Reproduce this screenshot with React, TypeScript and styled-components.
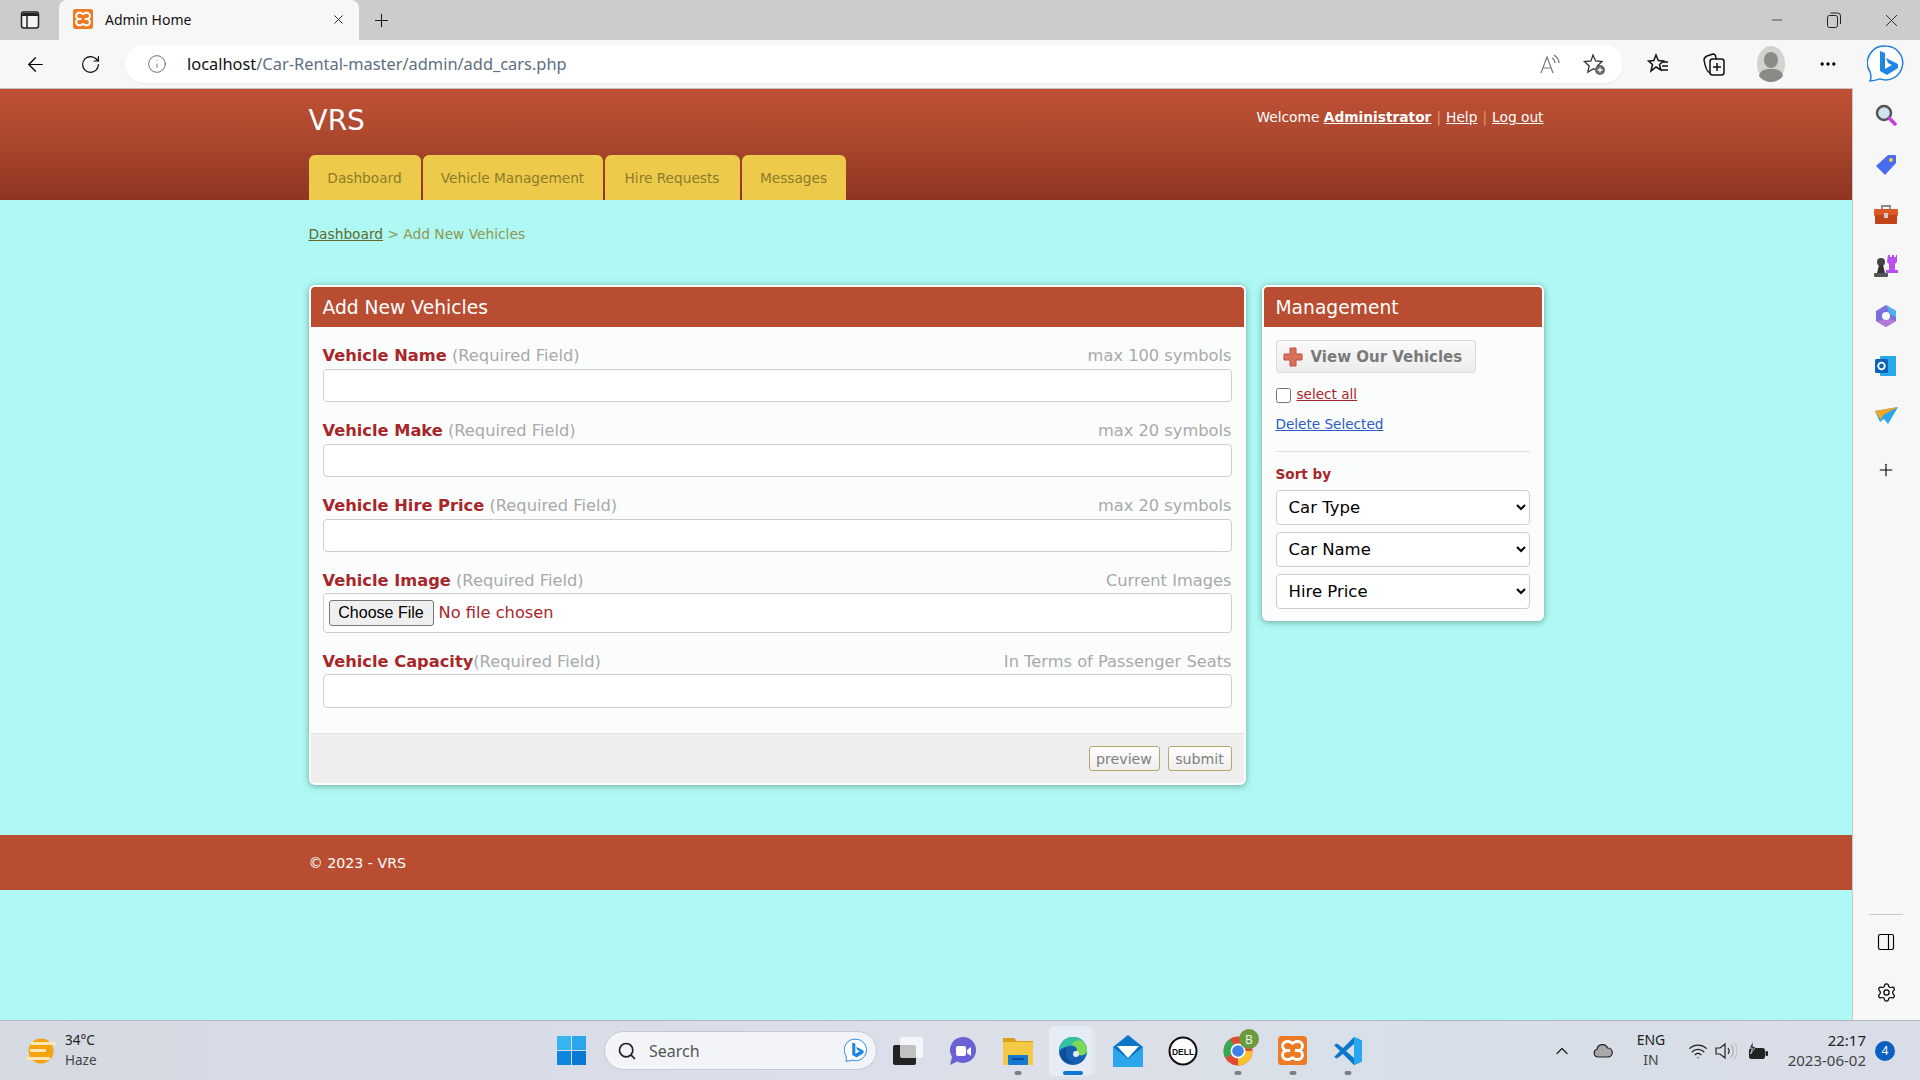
import React from "react";
import styled, { createGlobalStyle } from "styled-components";
import {
  ArrowLeft,
  ChevronUp,
  Ellipsis,
  Info,
  Minus,
  PanelRight,
  Plus,
  RotateCw,
  Search,
  Settings,
  Wifi,
  X,
} from "lucide-react";

const GlobalStyle = createGlobalStyle`
  html, body {
    margin: 0;
    padding: 0;
    height: 100%;
    overflow: hidden;
  }
  * {
    box-sizing: border-box;
  }
`;

const Screen = styled.div`
  width: 1920px;
  height: 1080px;
  display: flex;
  flex-direction: column;
  background: #aef9f4;
  font-family: "DejaVu Sans", Verdana, sans-serif;
`;

/* browser chrome */
const TabStrip = styled.div`
  height: 40px;
  background: #cccccc;
  display: flex;
  align-items: center;
  color: #1a1a1a;
  font-family: "Noto Sans", "Open Sans", sans-serif;
`;

const StripButton = styled.div<{ $w: number }>`
  width: ${(p) => p.$w}px;
  height: 40px;
  display: flex;
  align-items: center;
  justify-content: center;
  flex-shrink: 0;
`;

const BrowserTab = styled.div`
  width: 300px;
  height: 40px;
  background: #f7f7f7;
  border-radius: 8px 8px 0 0;
  display: flex;
  align-items: center;
  padding: 0 13px 2px 14px;
  font-size: 14px;
`;

const TabTitle = styled.span`
  margin-left: 12px;
  flex: 1;
  color: #111;
`;

const WindowControls = styled.div`
  margin-left: auto;
  display: flex;
`;

const Toolbar = styled.div`
  height: 48px;
  background: #f7f7f7;
  display: flex;
  align-items: center;
  font-family: "Noto Sans", "Open Sans", sans-serif;
`;

const ToolSlot = styled.div<{ $w: number }>`
  width: ${(p) => p.$w}px;
  height: 40px;
  display: flex;
  align-items: center;
  justify-content: center;
  flex-shrink: 0;
`;

const AddressBar = styled.div`
  width: 1498px;
  height: 38px;
  background: #fff;
  border-radius: 19px;
  display: flex;
  align-items: center;
  padding-left: 22px;
  box-shadow: 0 1px 2px rgba(0, 0, 0, 0.06);
`;

const Url = styled.div`
  margin-left: 20px;
  margin-bottom: 2px;
  flex: 1;
  font-size: 16.4px;
  color: #5e6e80;
  white-space: nowrap;
  b {
    font-weight: 400;
    color: #111;
  }
`;

/* page area */
const Middle = styled.div`
  flex: 1;
  display: flex;
  min-height: 0;
`;

const Page = styled.div`
  flex: 1;
  min-width: 0;
  border-top: 1px solid #c4c4c4;
`;

const Container = styled.div`
  width: 1235px;
  margin: 0 auto;
`;

const Header = styled.header`
  height: 111px;
  background: linear-gradient(#c05035, #b04a30 35%, #8e3522);
`;

const HeaderInner = styled(Container)`
  height: 100%;
  display: flex;
  flex-direction: column;
`;

const TopLine = styled.div`
  display: flex;
  justify-content: space-between;
  height: 66px;
`;

const Brand = styled.div`
  color: #fff;
  font-size: 28px;
  line-height: 30px;
  margin-top: 17px;
`;

const UserLinks = styled.div`
  margin-top: 19px;
  color: #fff;
  font-size: 13.75px;
  line-height: 18px;
  a {
    color: #fff;
    text-decoration: underline;
  }
  i {
    font-style: normal;
    color: #e09a6a;
    margin: 0 5px;
  }
`;

const Nav = styled.nav`
  display: flex;
  gap: 2px;
`;

const NavTab = styled.a<{ $w: number }>`
  width: ${(p) => p.$w}px;
  height: 45px;
  background: #eeca4a;
  border-radius: 6px 6px 0 0;
  color: #8c7b2b;
  font-size: 13.7px;
  display: flex;
  align-items: center;
  justify-content: center;
`;

const Crumbs = styled.div`
  height: 85px;
  padding-top: 25px;
  font-size: 13.75px;
  line-height: 18px;
  color: #8f9650;
  a {
    color: #5e6a2a;
    text-decoration: underline;
  }
`;

const Columns = styled.div`
  display: flex;
  gap: 16px;
  align-items: flex-start;
`;

const Panel = styled.section<{ $w: number }>`
  width: ${(p) => p.$w}px;
  background: #fbfdfc;
  border: 2px solid #fff;
  border-radius: 6px;
  overflow: hidden;
  box-shadow: 0 1px 6px rgba(60, 90, 80, 0.55);
`;

const PanelTitle = styled.h2`
  margin: 0;
  height: 40px;
  background: #b84d32;
  color: #fff;
  font-size: 18.7px;
  font-weight: 400;
  line-height: 42px;
  padding-left: 12px;
`;

const FormBody = styled.div`
  padding: 18px 12px 25px 12px;
`;

const Field = styled.div`
  margin-bottom: 18px;
  &:last-child {
    margin-bottom: 0;
  }
`;

const LabelRow = styled.div<{ $tight?: boolean }>`
  display: flex;
  justify-content: space-between;
  height: 20px;
  line-height: 22px;
  font-size: 16.25px;
  color: #a9a9a9;
  margin-bottom: ${(p) => (p.$tight ? 3 : 4)}px;
  strong {
    color: #a8262a;
  }
`;

const TextInput = styled.input<{ $h?: number }>`
  display: block;
  width: 100%;
  height: ${(p) => p.$h ?? 33}px;
  background: #fff;
  border: 1px solid #d3cdc5;
  border-radius: 4px;
  outline: none;
`;

const FileBox = styled.div`
  height: 40px;
  border: 1px solid #d3cdc5;
  border-radius: 4px;
  background: #fff;
  padding: 6px 0 0 5px;
`;

const FileInput = styled.input`
  font-family: "DejaVu Sans", sans-serif;
  font-size: 16.25px;
  color: #a8262a;
  width: 400px;
  &::file-selector-button {
    font-family: "Liberation Sans", sans-serif;
    font-size: 16px;
    color: #000;
    width: 105px;
    height: 26px;
    padding: 0;
    margin-right: 5px;
    background: #efefef;
    border: 1px solid #767676;
    border-radius: 3px;
  }
`;

const FormFooter = styled.div`
  height: 50px;
  background: #eeeeee;
  border-top: 1px solid #e2e2e2;
  display: flex;
  justify-content: flex-end;
  gap: 8px;
  padding: 12px 12px 0 0;
`;

const SmallButton = styled.button<{ $w: number }>`
  width: ${(p) => p.$w}px;
  height: 25px;
  padding: 0;
  font-family: "DejaVu Sans", sans-serif;
  font-size: 14.2px;
  color: #808080;
  background: linear-gradient(#fff, #eee);
  border: 1px solid #b5a76c;
  border-radius: 3px;
`;

const SideBody = styled.div`
  padding: 13px 12px 10px 12px;
`;

const ViewButton = styled.button`
  width: 200px;
  height: 33px;
  display: flex;
  align-items: center;
  padding: 0 0 0 6px;
  gap: 8px;
  font-family: "DejaVu Sans", sans-serif;
  font-size: 15px;
  font-weight: 700;
  color: #7a7a7a;
  background: linear-gradient(#fafafa, #ececec);
  border: 1px solid #dcdcdc;
  border-radius: 3px;
`;

const SelectAllRow = styled.div`
  display: flex;
  align-items: center;
  margin-top: 13px;
  height: 16px;
  font-size: 13.6px;
  a {
    color: #a8262a;
    text-decoration: underline;
    margin-left: 6px;
  }
`;

const CheckBox = styled.input`
  width: 15px;
  height: 15px;
  margin: 2px 0 0;
`;

const DeleteLink = styled.a`
  display: block;
  margin-top: 13px;
  font-size: 13.6px;
  line-height: 18px;
  color: #2a5cc4;
  text-decoration: underline;
`;

const Rule = styled.hr`
  border: none;
  border-top: 1px solid #e2e2de;
  margin: 18px 0 13px;
`;

const SortLabel = styled.div`
  font-size: 13.6px;
  font-weight: 700;
  line-height: 18px;
  color: #a8262a;
  margin-bottom: 7px;
`;

const SortSelect = styled.select`
  display: block;
  width: 254px;
  height: 35px;
  margin-bottom: 7px;
  padding-left: 8px;
  font-family: "DejaVu Sans", sans-serif;
  font-size: 16.5px;
  color: #000;
  background: #fff;
  border: 1px solid #d3cdc5;
  border-radius: 4px;
  &:last-child {
    margin-bottom: 0;
  }
`;

const Footer = styled.footer`
  height: 55px;
  margin-top: 50px;
  background: #b84d32;
  color: #fff;
  font-size: 14.2px;
  line-height: 57px;
`;

/* edge side bar */
const EdgeBar = styled.aside`
  width: 68px;
  background: #f7f7f7;
  border-left: 1px solid #c9c9c9;
  display: flex;
  flex-direction: column;
  align-items: center;
  padding: 2px 1px 0 0;
`;

const EdgeSlot = styled.div<{ $h?: number; $push?: number }>`
  height: ${(p) => p.$h ?? 50.15}px;
  margin-top: ${(p) => p.$push ?? 0}px;
  display: flex;
  align-items: center;
  justify-content: center;
`;

const EdgeSpacer = styled.div`
  flex: 1;
`;

const EdgeRule = styled.div`
  width: 34px;
  border-top: 1px solid #c9c9c9;
  margin-bottom: 2px;
`;

/* task bar */
const TaskBar = styled.div`
  height: 60px;
  border-top: 1px solid #b4b8c0;
  background: linear-gradient(90deg, #d4d9e2, #d9deea 40%, #dde0e8 55%, #d6dfe8 75%, #dadde8);
  display: flex;
  align-items: center;
  font-family: "Noto Sans", "Open Sans", sans-serif;
  color: #222;
`;

const Weather = styled.div`
  width: 557px;
  padding-left: 26px;
  display: flex;
  align-items: center;
  gap: 9px;
`;

const StackText = styled.div<{ $align?: string; $size?: number }>`
  display: flex;
  flex-direction: column;
  font-size: ${(p) => p.$size ?? 13.5}px;
  line-height: 20px;
  margin-top: -2px;
  text-align: ${(p) => p.$align ?? "left"};
  span + span {
    color: #444;
  }
`;

const SearchPill = styled.div`
  width: 273px;
  height: 39px;
  margin-left: 18px;
  background: #f2f4f8;
  border: 1px solid #c4c8d2;
  border-radius: 20px;
  display: flex;
  align-items: center;
  padding: 0 8px 0 12px;
  font-size: 16px;
  color: #555;
`;

const SearchText = styled.span`
  margin-left: 12px;
  flex: 1;
`;

const Apps = styled.div`
  display: flex;
  margin-left: 3px;
`;

const AppSlot = styled.div<{ $active?: boolean; $running?: boolean }>`
  width: 55px;
  height: 50px;
  position: relative;
  display: flex;
  align-items: center;
  justify-content: center;
  &::before {
    content: "";
    display: ${(p) => (p.$active ? "block" : "none")};
    position: absolute;
    top: 0;
    bottom: 0;
    left: 4px;
    width: 43px;
    border-radius: 5px;
    background: #e6ecf5;
    box-shadow: 5px 0 0 -1px #dfe6f0;
  }
  &::after {
    content: "";
    display: ${(p) => (p.$running || p.$active ? "block" : "none")};
    position: absolute;
    bottom: 1px;
    left: 50%;
    transform: translateX(-50%);
    width: ${(p) => (p.$active ? 20 : 7)}px;
    height: 4px;
    border-radius: 2px;
    background: ${(p) => (p.$active ? "#0a78d4" : "#7b7f88")};
  }
  svg {
    position: relative;
  }
`;

const Tray = styled.div`
  margin-left: auto;
  display: flex;
  align-items: center;
  padding-right: 25px;
`;

const TraySlot = styled.div<{ $w: number }>`
  width: ${(p) => p.$w}px;
  display: flex;
  justify-content: center;
  align-items: center;
`;

const Clock = styled.div`
  width: 90px;
`;

const Badge = styled.div`
  width: 20px;
  height: 20px;
  margin-left: 9px;
  border-radius: 50%;
  background: #0a5fc0;
  color: #fff;
  font-size: 12px;
  text-align: center;
  line-height: 20px;
`;

/* drawings */
const XamppIcon = ({ size = 20 }: { size?: number }) => (
  <svg width={size} height={size} viewBox="0 0 24 24">
    <rect width="24" height="24" rx="3" fill="#ee7a24" />
    <path
      d="M10 4.500H7.500a3 3 0 0 0 0 7.500H10M10 12H7.500a3 3 0 0 0 0 7.500H10M14 4.500h2.500a3 3 0 0 1 0 7.500H14M14 12h2.500a3 3 0 0 1 0 7.500H14M10 4.500c1 2 3 2 4 0M10 19.500c1-2 3-2 4 0"
      fill="none"
      stroke="#fff"
      strokeWidth="2.400"
    />
  </svg>
);

const BingBubble = ({ size = 38 }: { size?: number }) => (
  <svg width={size} height={size * 1.05} viewBox="0 0 38 40">
    <path
      d="M19 2a17 17 0 1 1-6 33c-3 1-7 2-10 2 1-2 1-6 0-9A17 17 0 0 1 19 2z"
      fill="#fff"
      stroke="#1f7fe0"
      strokeWidth="1.500"
    />
    <path d="M13 7l5 2v16l7-4-4-2-2-5 12 6v4l-11 7-7-4z" fill="#1e86e8" />
  </svg>
);

const EdgeLogo = () => (
  <svg width="30" height="30" viewBox="0 0 30 30">
    <circle cx="15" cy="15" r="14" fill="#1560b0" />
    <path d="M1 15C2 5 9 1 15 1c8 0 14 6 14 13 0 4-4 6-8 5-3-1-3-3-2-5 0-3-4-5-8-4-5 1-9 3-10 5z" fill="#33c3a0" />
    <path d="M29 14c0 4-4 6-8 5-3-1-3-3-2-5 0-3-3-5-6-5 3-5 9-6 12-3 3 2 4 5 4 8z" fill="#7ed957" />
    <path d="M8 17c0 6 4 9 9 9-6 3-14 0-15-8 1-4 4-6 7-7-1 2-1 4-1 6z" fill="#0f4d96" />
    <circle cx="18" cy="18" r="3" fill="#e6ecf5" />
  </svg>
);

const ChromeLogo = () => (
  <svg width="42" height="44" viewBox="0 0 42 44">
    <circle cx="21" cy="22" r="14.500" fill="#e24a33" />
    <path d="M21 22L8.500 29A14.500 14.500 0 0 1 13 10z" fill="#34a853" />
    <path d="M21 22h14.500A14.500 14.500 0 0 1 21 36.500z" fill="#fbc02d" />
    <circle cx="21" cy="22" r="7.500" fill="#fff" />
    <circle cx="21" cy="22" r="5.800" fill="#3f82ea" />
    <circle cx="32" cy="10" r="10" fill="#6d9a3d" />
    <text x="32" y="14.500" fontSize="12" fill="#eef4e0" textAnchor="middle" fontFamily="Noto Sans">B</text>
  </svg>
);

const DellLogo = () => (
  <svg width="30" height="30" viewBox="0 0 30 30">
    <circle cx="15" cy="15" r="13.500" fill="#fff" stroke="#111" strokeWidth="2" />
    <text x="15" y="18.500" fontSize="8.500" fontWeight="700" textAnchor="middle" fontFamily="Liberation Sans" fill="#111">DELL</text>
  </svg>
);

const WindowsLogo = () => (
  <svg width="29" height="29" viewBox="0 0 29 29" style={{ flexShrink: 0 }}>
    <rect width="14" height="14" fill="#36b5f0" />
    <rect x="15" width="14" height="14" fill="#2aa6ec" />
    <rect y="15" width="14" height="14" fill="#0c86de" />
    <rect x="15" y="15" width="14" height="14" fill="#0a78d4" />
  </svg>
);

const WeatherIcon = () => (
  <svg width="30" height="26" viewBox="0 0 30 26">
    <circle cx="15" cy="13" r="12.500" fill="#f5a20f" />
    <g fill="#fbe6b4">
      <rect x="5" y="4" width="25" height="3" />
      <rect x="4" y="11" width="16" height="3" />
      <rect x="0" y="19" width="24" height="3" />
    </g>
  </svg>
);

const TaskViewIcon = () => (
  <svg width="30" height="28" viewBox="0 0 30 28">
    <rect x="0" y="8" width="23" height="20" rx="2" fill="#222" />
    <rect x="7" y="0" width="23" height="21" rx="2" fill="#fff" opacity="0.72" />
  </svg>
);

const TeamsIcon = () => (
  <svg width="30" height="30" viewBox="0 0 30 30">
    <path d="M15 1a13 13 0 1 1-6 24.500L2 29l2-8A13 13 0 0 1 15 1z" fill="#6a62d4" />
    <rect x="8" y="10" width="10" height="10" rx="2" fill="#fff" />
    <path d="M19 14l4-3v9l-4-3z" fill="#fff" />
  </svg>
);

const FolderIcon = () => (
  <svg width="30" height="30" viewBox="0 0 30 30">
    <path d="M0 2h11l3 3h16v24H0z" fill="#d9a017" />
    <rect x="0" y="6" width="30" height="23" rx="1" fill="#f6c944" />
    <rect x="5" y="19" width="20" height="10" rx="1" fill="#1478d4" />
    <rect x="9" y="22" width="12" height="2" fill="#0b4f96" />
  </svg>
);

const MailIcon = () => (
  <svg width="30" height="32" viewBox="0 0 30 32">
    <path d="M15 0l15 12v20H0V12z" fill="#0d74c8" />
    <path d="M4 11h22L15 23z" fill="#fff" />
    <path d="M0 12l15 12 15-12v20H0z" fill="#2ba5ec" />
  </svg>
);

const VsCodeIcon = () => (
  <svg width="30" height="30" viewBox="0 0 30 30">
    <path d="M21 1l8 3.500v21L21 29l-11-11-6 4.500L1 21l6-6-6-6 3-1.500L10 12z" fill="#0e78c8" />
    <path d="M21 8l-8 7 8 7z" fill="#d9dfe8" />
    <path d="M21 1l8 3.500v21L21 29z" fill="#27a7ef" />
  </svg>
);

const CloudIcon = () => (
  <svg width="20" height="20" viewBox="0 0 20 20">
    <path d="M5 16a4 4 0 0 1-1-7.800A5.500 5.500 0 0 1 14.500 7 4.500 4.500 0 0 1 15 16z" fill="#a8a8a8" stroke="#222" strokeWidth="1.200" />
  </svg>
);

const SpeakerIcon = () => (
  <svg width="22" height="20" viewBox="0 0 22 20" fill="none" stroke="#222" strokeWidth="1.200">
    <path d="M1 7v6h4l5 4V3L5 7z" />
    <path d="M13 7c1.500 2 1.500 4 0 6" />
    <path d="M16 4c3 3 3 9 0 12" stroke="#aaa" />
    <path d="M19 2c4 4 4 12 0 16" stroke="#c4c4c4" />
  </svg>
);

const BatteryIcon = () => (
  <svg width="22" height="20" viewBox="0 0 22 20">
    <rect x="2" y="7" width="16" height="11" rx="2.500" fill="#222" />
    <rect x="18.500" y="10" width="2.500" height="5" rx="1" fill="#222" />
    <path d="M6 0L2.500 7H5.500L3.500 13 9 5.500H6z" fill="#222" stroke="#dfe3ea" strokeWidth="0.800" />
  </svg>
);

const SidebarToggleIcon = () => (
  <svg width="20" height="20" viewBox="0 0 20 20">
    <rect x="1.500" y="2" width="17" height="16" rx="2.500" fill="#f4f4f4" stroke="#222" strokeWidth="1.500" />
    <path d="M2 6V4.500A2 2 0 0 1 4 3h12a2 2 0 0 1 2 1.500V6z" fill="#222" />
    <path d="M7 6v12" stroke="#222" strokeWidth="1.500" />
  </svg>
);

const RestoreIcon = () => (
  <svg width="14" height="16" viewBox="0 0 14 16" fill="none" stroke="#222" strokeWidth="1">
    <rect x="0.500" y="3.500" width="10" height="12" rx="2" />
    <path d="M3.500 1h7a3 3 0 0 1 3 3v8" />
  </svg>
);

const ReadAloudIcon = () => (
  <svg width="22" height="22" viewBox="0 0 22 22" fill="none" stroke="#777" strokeWidth="1.200">
    <path d="M2 20L8 4l6 16M4.500 15h7" />
    <path d="M13 5c2 1 3 3 3 5M15 2c3 2 5 5 5 8" />
  </svg>
);

const StarAddIcon = () => (
  <svg width="24" height="24" viewBox="0 0 24 24" fill="none" stroke="#333" strokeWidth="1.300">
    <path d="M11 3l2.600 6 6.400.6-4.800 4.300 1 4-5.200-1-5.200 3.300 1.400-6.300L2.500 9.600 9 9z" />
    <circle cx="18" cy="18" r="5" fill="#666" stroke="none" />
    <path d="M18 15.500v5M15.500 18h5" stroke="#fff" />
  </svg>
);

const FavoritesIcon = () => (
  <svg width="22" height="22" viewBox="0 0 22 22" fill="none" stroke="#111" strokeWidth="1.500">
    <path d="M9 2l2.300 5.500 5.200.5-4 3.500 1.300 5.500L9 14l-5 4 1.500-6.500L1.500 8l5.300-.5z" />
    <path d="M15 9h6M15 13h6M14 17h7" />
  </svg>
);

const CollectionsIcon = () => (
  <svg width="24" height="24" viewBox="0 0 24 24" fill="none" stroke="#111" strokeWidth="1.500">
    <rect x="8" y="7" width="14" height="16" rx="2.500" />
    <path d="M8 21C5 20 3 14 2 8c0-2 1-3 3-4l6-2c2 0 3 1 3 5" />
    <path d="M15 11v8M11 15h8" />
  </svg>
);

const ProfileIcon = () => (
  <svg width="28" height="36" viewBox="0 0 28 36">
    <ellipse cx="14" cy="18" rx="14" ry="18" fill="#d2d2ce" />
    <ellipse cx="14" cy="14" rx="7" ry="8" fill="#8a8a86" />
    <path d="M2 30c1-6 6-7 12-7s11 1 12 7c-3 4-8 6-12 6s-9-2-12-6z" fill="#8a8a86" />
  </svg>
);

const ToolSearchIcon = () => (
  <svg width="22" height="22" viewBox="0 0 22 22" fill="none">
    <circle cx="9" cy="9" r="7" fill="#cfe2ee" stroke="#555" strokeWidth="2.500" />
    <path d="M14 14l6 6" stroke="#c23fd8" strokeWidth="3.500" strokeLinecap="round" />
  </svg>
);

const TagIcon = () => (
  <svg width="22" height="22" viewBox="0 0 22 22">
    <path d="M13 1h7a1 1 0 0 1 1 1v7L10 21 1 12z" fill="#4a6cf0" />
    <circle cx="16" cy="6" r="2" fill="#f5cf3a" />
  </svg>
);

const ToolboxIcon = () => (
  <svg width="24" height="22" viewBox="0 0 24 22">
    <path d="M8 5V2h8v3" fill="none" stroke="#888" strokeWidth="1.800" />
    <rect y="5" width="24" height="7" rx="1" fill="#dc5a24" />
    <rect x="1" y="11" width="22" height="9" rx="1" fill="#c24416" />
    <rect x="10" y="9" width="4" height="5" fill="#ccc" />
  </svg>
);

const ChessIcon = () => (
  <svg width="24" height="24" viewBox="0 0 24 24">
    <path d="M14 2h2v2h2V2h2v2h2V2h1v7l-2 2v6h3v3H12v-3h3v-6l-2-2z" fill="#b84ff0" />
    <circle cx="7" cy="9" r="4" fill="#444" />
    <path d="M5 12h4l2 8H3z" fill="#333" />
    <rect x="0" y="20" width="14" height="4" rx="1" fill="#555" />
  </svg>
);

const M365Icon = () => (
  <svg width="22" height="24" viewBox="0 0 22 24">
    <path d="M11 1l10 6v10l-10 6-10-6V7z" fill="#7a6fdc" />
    <path d="M11 1l10 6v6l-6-3z" fill="#4ab6ec" />
    <path d="M1 17l10 6 10-6-7-2z" fill="#b07ad8" />
    <circle cx="11" cy="12" r="4" fill="#f7f7f7" />
  </svg>
);

const OutlookIcon = () => (
  <svg width="22" height="22" viewBox="0 0 22 22">
    <rect x="5" y="1" width="16" height="20" rx="1" fill="#28a8ea" />
    <rect y="4" width="13" height="14" rx="1.500" fill="#0a64b8" />
    <circle cx="6.500" cy="11" r="3.300" fill="none" stroke="#fff" strokeWidth="1.800" />
  </svg>
);

const SendIcon = () => (
  <svg width="24" height="18" viewBox="0 0 24 18">
    <path d="M1 4l23-4-10 17-4-5-4 3z" fill="#2ba5ec" />
    <path d="M1 4l23-4-15 8 -2 5z" fill="#f3a71c" />
  </svg>
);

const PlusBadgeIcon = () => (
  <svg width="20" height="20" viewBox="0 0 20 20">
    <path d="M7 1h6v6h6v6h-6v6H7v-6H1V7h6z" fill="#d9705c" stroke="#c0503a" />
  </svg>
);

type FieldDef = { name: string; note: string };

const fields: FieldDef[] = [
  { name: "Vehicle Name", note: "max 100 symbols" },
  { name: "Vehicle Make", note: "max 20 symbols" },
  { name: "Vehicle Hire Price", note: "max 20 symbols" },
];

const App = () => {
  return (
    <Screen>
      <GlobalStyle />
      <TabStrip>
        <StripButton $w={59}>
          <SidebarToggleIcon />
        </StripButton>
        <BrowserTab>
          <XamppIcon />
          <TabTitle>Admin Home</TabTitle>
          <X size={15} strokeWidth={1.5} />
        </BrowserTab>
        <StripButton $w={44}>
          <Plus size={21} strokeWidth={1.2} />
        </StripButton>
        <WindowControls>
          <StripButton $w={57}>
            <Minus size={16} strokeWidth={1} />
          </StripButton>
          <StripButton $w={57}>
            <RestoreIcon />
          </StripButton>
          <StripButton $w={58}>
            <X size={21} strokeWidth={1} />
          </StripButton>
        </WindowControls>
      </TabStrip>
      <Toolbar>
        <ToolSlot $w={70}>
          <ArrowLeft size={23} strokeWidth={1.3} />
        </ToolSlot>
        <ToolSlot $w={40}>
          <RotateCw size={21} strokeWidth={1.3} />
        </ToolSlot>
        <ToolSlot $w={15} />
        <AddressBar>
          <Info size={20} strokeWidth={1} color="#555" />
          <Url>
            <b>localhost</b>/Car-Rental-master/admin/add_cars.php
          </Url>
          <ToolSlot $w={44}>
            <ReadAloudIcon />
          </ToolSlot>
          <ToolSlot $w={44}>
            <StarAddIcon />
          </ToolSlot>
          <ToolSlot $w={7} />
        </AddressBar>
        <ToolSlot $w={7} />
        <ToolSlot $w={56}>
          <FavoritesIcon />
        </ToolSlot>
        <ToolSlot $w={56}>
          <CollectionsIcon />
        </ToolSlot>
        <ToolSlot $w={57}>
          <ProfileIcon />
        </ToolSlot>
        <ToolSlot $w={58}>
          <Ellipsis size={20} />
        </ToolSlot>
        <ToolSlot $w={58}>
          <BingBubble />
        </ToolSlot>
      </Toolbar>
      <Middle>
        <Page>
          <Header>
            <HeaderInner>
              <TopLine>
                <Brand>VRS</Brand>
                <UserLinks>
                  Welcome <a href="#admin"><b>Administrator</b></a>
                  <i>|</i>
                  <a href="#help">Help</a>
                  <i>|</i>
                  <a href="#logout">Log out</a>
                </UserLinks>
              </TopLine>
              <Nav>
                <NavTab $w={112}>Dashboard</NavTab>
                <NavTab $w={180}>Vehicle Management</NavTab>
                <NavTab $w={135}>Hire Requests</NavTab>
                <NavTab $w={104}>Messages</NavTab>
              </Nav>
            </HeaderInner>
          </Header>
          <Container>
            <Crumbs>
              <a href="#dash">Dashboard</a> &gt; Add New Vehicles
            </Crumbs>
            <Columns>
              <Panel $w={937}>
                <PanelTitle>Add New Vehicles</PanelTitle>
                <FormBody>
                  {fields.map((f) => (
                    <Field key={f.name}>
                      <LabelRow>
                        <span>
                          <strong>{f.name}</strong> (Required Field)
                        </span>
                        <span>{f.note}</span>
                      </LabelRow>
                      <TextInput type="text" />
                    </Field>
                  ))}
                  <Field>
                    <LabelRow $tight>
                      <span>
                        <strong>Vehicle Image</strong> (Required Field)
                      </span>
                      <span>Current Images</span>
                    </LabelRow>
                    <FileBox>
                      <FileInput type="file" />
                    </FileBox>
                  </Field>
                  <Field>
                    <LabelRow $tight>
                      <span>
                        <strong>Vehicle Capacity</strong>(Required Field)
                      </span>
                      <span>In Terms of Passenger Seats</span>
                    </LabelRow>
                    <TextInput type="text" $h={34} />
                  </Field>
                </FormBody>
                <FormFooter>
                  <SmallButton $w={71}>preview</SmallButton>
                  <SmallButton $w={64}>submit</SmallButton>
                </FormFooter>
              </Panel>
              <Panel $w={282}>
                <PanelTitle>Management</PanelTitle>
                <SideBody>
                  <ViewButton>
                    <PlusBadgeIcon />
                    View Our Vehicles
                  </ViewButton>
                  <SelectAllRow>
                    <CheckBox type="checkbox" />
                    <a href="#all">select all</a>
                  </SelectAllRow>
                  <DeleteLink href="#del">Delete Selected</DeleteLink>
                  <Rule />
                  <SortLabel>Sort by</SortLabel>
                  <SortSelect defaultValue="type">
                    <option value="type">Car Type</option>
                  </SortSelect>
                  <SortSelect defaultValue="name">
                    <option value="name">Car Name</option>
                  </SortSelect>
                  <SortSelect defaultValue="price">
                    <option value="price">Hire Price</option>
                  </SortSelect>
                </SideBody>
              </Panel>
            </Columns>
          </Container>
          <Footer>
            <Container>© 2023 - VRS</Container>
          </Footer>
        </Page>
        <EdgeBar>
          <EdgeSlot><ToolSearchIcon /></EdgeSlot>
          <EdgeSlot><TagIcon /></EdgeSlot>
          <EdgeSlot><ToolboxIcon /></EdgeSlot>
          <EdgeSlot><ChessIcon /></EdgeSlot>
          <EdgeSlot><M365Icon /></EdgeSlot>
          <EdgeSlot><OutlookIcon /></EdgeSlot>
          <EdgeSlot><SendIcon /></EdgeSlot>
          <EdgeSlot $push={4}><Plus size={20} strokeWidth={1.3} /></EdgeSlot>
          <EdgeSpacer />
          <EdgeRule />
          <EdgeSlot $h={50}><PanelRight size={20} strokeWidth={1.4} /></EdgeSlot>
          <EdgeSlot $h={50}><Settings size={21} strokeWidth={1.4} /></EdgeSlot>
          <EdgeSlot $h={3} />
        </EdgeBar>
      </Middle>
      <TaskBar>
        <Weather>
          <WeatherIcon />
          <StackText>
            <span>34°C</span>
            <span>Haze</span>
          </StackText>
        </Weather>
        <WindowsLogo />
        <SearchPill>
          <Search size={20} strokeWidth={2} color="#222" />
          <SearchText>Search</SearchText>
          <BingBubble size={24} />
        </SearchPill>
        <Apps>
          <AppSlot><TaskViewIcon /></AppSlot>
          <AppSlot><TeamsIcon /></AppSlot>
          <AppSlot $running><FolderIcon /></AppSlot>
          <AppSlot $active><EdgeLogo /></AppSlot>
          <AppSlot><MailIcon /></AppSlot>
          <AppSlot><DellLogo /></AppSlot>
          <AppSlot $running><ChromeLogo /></AppSlot>
          <AppSlot $running><XamppIcon size={29} /></AppSlot>
          <AppSlot $running><VsCodeIcon /></AppSlot>
        </Apps>
        <Tray>
          <TraySlot $w={40}><ChevronUp size={20} strokeWidth={1.5} /></TraySlot>
          <TraySlot $w={42}><CloudIcon /></TraySlot>
          <TraySlot $w={54}>
            <StackText $align="center" $size={14}>
              <span>ENG</span>
              <span>IN</span>
            </StackText>
          </TraySlot>
          <TraySlot $w={6} />
          <TraySlot $w={28}><Wifi size={20} strokeWidth={1.5} /></TraySlot>
          <TraySlot $w={28}><SpeakerIcon /></TraySlot>
          <TraySlot $w={36}><BatteryIcon /></TraySlot>
          <Clock>
            <StackText $align="right" $size={15}>
              <span>22:17</span>
              <span>2023-06-02</span>
            </StackText>
          </Clock>
          <Badge>4</Badge>
        </Tray>
      </TaskBar>
    </Screen>
  );
};

export default App;
